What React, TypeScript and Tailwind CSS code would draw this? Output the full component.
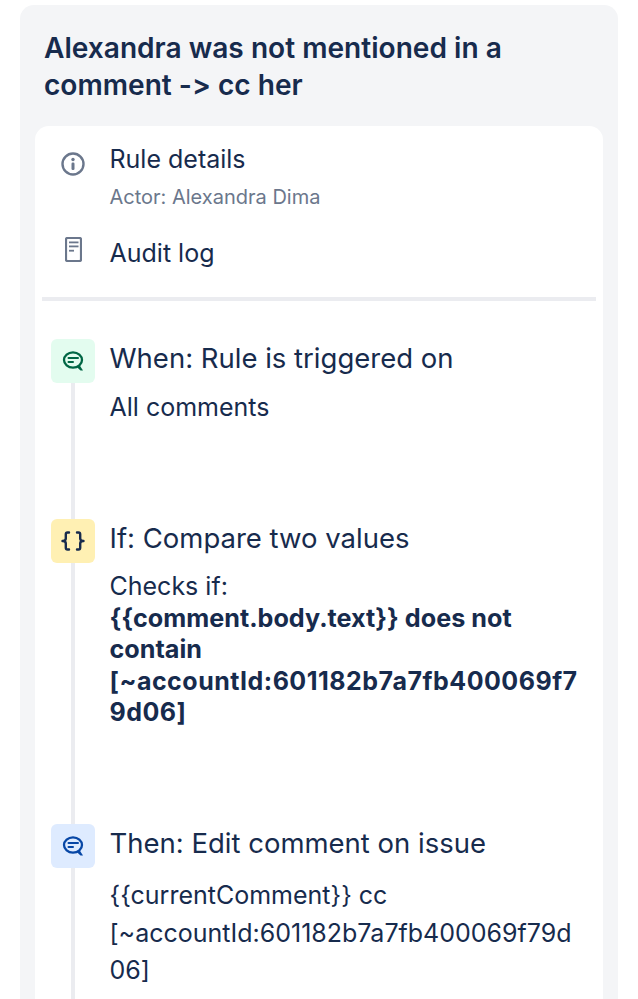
import React from "react";

const CommentIcon = ({ color }: { color: string }) => (
  <svg width="24" height="24" viewBox="0 0 24 24" fill="none">
    <ellipse cx="12" cy="11" rx="9" ry="7.700" stroke={color} strokeWidth="2.300" />
    <path d="M16 18.200L19.500 21.500H22L18.800 16.500Z" fill={color} />
    <rect x="6.500" y="8" width="11.500" height="2" rx="1" fill={color} />
    <rect x="6.500" y="12" width="6.500" height="2" rx="1" fill={color} />
  </svg>
);

const BracesIcon = () => (
  <svg width="24" height="20" viewBox="0 0 24 20" fill="none" stroke="#172b4d" strokeWidth="2.400" strokeLinecap="round" strokeLinejoin="round">
    <path d="M8 1.500H6.500C5.300 1.500 4.800 2.200 4.800 3.300V7.500C4.800 9 3.500 10 1.500 10C3.500 10 4.800 11 4.800 12.500V16.700C4.800 17.800 5.300 18.500 6.500 18.500H8" />
    <path d="M16 1.500H17.500C18.700 1.500 19.200 2.200 19.200 3.300V7.500C19.200 9 20.500 10 22.500 10C20.500 10 19.200 11 19.200 12.500V16.700C19.200 17.800 18.700 18.500 17.500 18.500H16" />
  </svg>
);

const Step = ({ icon, bg, title, children, className, bodyClass }: { icon: React.ReactNode; bg: string; title: string; children: React.ReactNode; className: string; bodyClass: string }) => (
  <div className={`flex ${className}`}>
    <div className="flex flex-col items-center w-[44px] shrink-0">
      <div className={`w-[44px] h-[44px] rounded-[6px] flex items-center justify-center ${bg}`}>{icon}</div>
      <div className="w-[4px] grow bg-[#ebecf0]"></div>
    </div>
    <div className="pl-[14.5px] w-[490px]">
      <h3 className="text-[27.5px] leading-[38px] text-[#172b4d]">{title}</h3>
      <div className={`text-[25px] text-[#172b4d] [overflow-wrap:anywhere] ${bodyClass}`}>{children}</div>
    </div>
  </div>
);

export default function App() {
  return (
    <div className="h-[999px] overflow-hidden bg-white pt-[5px] px-[20px] font-['Inter',sans-serif] [font-variant-ligatures:none] [font-feature-settings:'calt'_0]">
      <section className="bg-[#f4f5f7] rounded-t-[14px] w-[598px] h-[994px] px-[15px]">
        <h1 className="font-semibold text-[28.1px] leading-[37px] text-[#172b4d] pt-[25px] pl-[9px] pb-[22px] w-[520px]">
          Alexandra was not mentioned in a comment -&gt; cc her
        </h1>
        <div className="bg-white rounded-t-[14px] h-[900px] px-[7px] pt-[16px]">
          <div className="flex">
            <div className="w-[62px] pl-[19px] pt-[10px] shrink-0">
              <svg width="24" height="24" viewBox="0 0 24 24" fill="none">
                <circle cx="12" cy="12" r="10.500" stroke="#6b778c" strokeWidth="2.400" />
                <circle cx="12" cy="7.500" r="1.700" fill="#6b778c" />
                <rect x="10.500" y="10.500" width="3" height="7.500" rx="1.200" fill="#6b778c" />
              </svg>
            </div>
            <div className="pl-[5.5px]">
              <div className="text-[25px] leading-[34px] text-[#172b4d]">Rule details</div>
              <div className="text-[20px] leading-[28px] mt-[7px] text-[#6b778c]">Actor: Alexandra Dima</div>
            </div>
          </div>
          <div className="flex mt-[25px]">
            <div className="w-[62px] pl-[23px] pt-[1px] shrink-0">
              <svg width="17" height="25" viewBox="0 0 17 25" fill="none">
                <rect x="1" y="1" width="15" height="23" rx="1.500" stroke="#6b778c" strokeWidth="2.200" />
                <rect x="4" y="4.500" width="9.500" height="1.800" fill="#6b778c" />
                <rect x="4" y="8.500" width="9.500" height="1.800" fill="#6b778c" />
                <rect x="4" y="12.800" width="5" height="1.800" fill="#6b778c" />
              </svg>
            </div>
            <div className="pl-[5.5px] text-[25px] leading-[34px] text-[#172b4d]">Audit log</div>
          </div>
          <div className="h-[4px] bg-[#ebecf0] mt-[27px]"></div>
          <div className="pl-[9px] pt-[38px]">
            <Step
              className="h-[180px]"
              bg="bg-[#e3fcef]"
              bodyClass="leading-[31px] mt-[15px]"
              title="When: Rule is triggered on"
              icon={<CommentIcon color="#006644" />}
            >
              All comments
            </Step>
            <Step
              className="h-[305px]"
              bg="bg-[#fff0b3]"
              bodyClass="leading-[31.5px] mt-[14px]"
              title="If: Compare two values"
              icon={<BracesIcon />}
            >
              Checks if:
              <strong className="block font-bold text-[25.2px]">{"{{comment.body.text}} does not contain"}</strong>
              <strong className="block font-bold tracking-[0.5px]">
                [~accountId:601182b7a7fb400069f7
                <br />
                9d06]
              </strong>
            </Step>
            <Step
              className="h-[200px]"
              bg="bg-[#deebff]"
              bodyClass="leading-[37.5px] mt-[15px]"
              title="Then: Edit comment on issue"
              icon={<CommentIcon color="#0747a6" />}
            >
              {"{{currentComment}} cc [~accountId:601182b7a7fb400069f79d06]"}
            </Step>
          </div>
        </div>
      </section>
    </div>
  );
}
